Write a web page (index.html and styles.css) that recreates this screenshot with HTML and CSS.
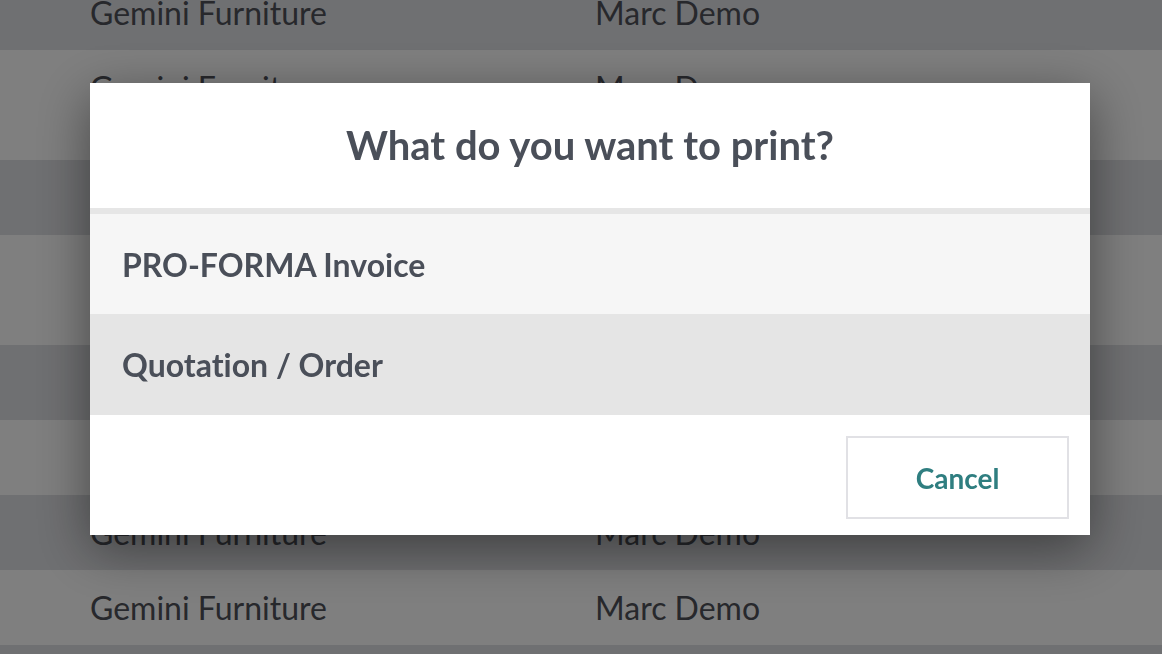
FILE: index.html
```html
<!DOCTYPE html>
<html lang="en">
<head>
<meta charset="utf-8">
<title>Print</title>
<link rel="stylesheet" href="styles.css">
</head>
<body>
<div class="list">
  <div class="row alt"><span class="c1">Gemini Furniture</span><span class="c2">Marc Demo</span></div>
  <div class="row tall"><span class="c1">Gemini Furniture</span><span class="c2">Marc Demo</span></div>
  <div class="row alt"><span class="c1">Gemini Furniture</span><span class="c2">Marc Demo</span></div>
  <div class="row tall"><span class="c1">Gemini Furniture</span><span class="c2">Marc Demo</span></div>
  <div class="row alt"><span class="c1">Gemini Furniture</span><span class="c2">Marc Demo</span></div>
  <div class="row"><span class="c1">Gemini Furniture</span><span class="c2">Marc Demo</span></div>
  <div class="row alt"><span class="c1">Gemini Furniture</span><span class="c2">Marc Demo</span></div>
  <div class="row"><span class="c1">Gemini Furniture</span><span class="c2">Marc Demo</span></div>
  <div class="row alt short"><span class="c1"></span><span class="c2"></span></div>
</div>
<div class="overlay">
  <div class="modal">
    <div class="modal-header">What do you want to print?</div>
    <div class="modal-body">
      <div class="option first">PRO-FORMA Invoice</div>
      <div class="option second">Quotation / Order</div>
    </div>
    <div class="modal-footer">
      <button class="btn-cancel">Cancel</button>
    </div>
  </div>
</div>
</body>
</html>
```
FILE: styles.css
```css
html, body {
  margin: 0;
  padding: 0;
  height: 100%;
  overflow: hidden;
}
body {
  font-family: Lato, "Open Sans", "Liberation Sans", sans-serif;
  font-variant-ligatures: none;
  background: #ffffff;
  color: #4e5058;
}
.list {
  margin-top: -25px;
}
.row {
  display: flex;
  height: 75px;
  line-height: 75px;
  font-size: 32px;
  background: #ffffff;
  color: #4e5058;
}
.row.alt {
  background: #dfe0e4;
}
.row.tall {
  height: 110px;
}
.row.short {
  height: 34px;
}
.c1 {
  padding-left: 90px;
  width: 505px;
  flex: none;
}
.c2 {
  flex: 1;
}
.overlay {
  position: fixed;
  inset: 0;
  background: rgba(0, 0, 0, 0.5);
  padding: 83px 0 0 90px;
}
.modal {
  width: 1000px;
  background: #ffffff;
  box-shadow: 0 14px 50px rgba(0, 0, 0, 0.45);
  display: flex;
  flex-direction: column;
}
.modal-header {
  height: 125px;
  display: flex;
  align-items: center;
  justify-content: center;
  font-size: 40px;
  font-weight: 700;
  color: #4a4f59;
  padding-bottom: 2px;
  box-sizing: border-box;
}
.modal-body {
  border-top: 6px solid #e6e6e6;
}
.option {
  height: 100px;
  display: flex;
  align-items: center;
  padding-left: 32px;
  font-size: 32px;
  font-weight: 700;
  color: #4a4f59;
}
.option.first {
  background: #f6f6f6;
}
.option.second {
  background: #e5e5e5;
  height: 101px;
}
.modal-footer {
  display: flex;
  justify-content: flex-end;
  padding: 21px 21px 16px 0;
}
.btn-cancel {
  width: 223px;
  height: 83px;
  background: #ffffff;
  border: 2px solid #e1e1e5;
  font-family: Lato, "Open Sans", sans-serif;
  font-variant-ligatures: none;
  font-size: 28px;
  font-weight: 700;
  color: #2f7e80;
  cursor: pointer;
}
```
